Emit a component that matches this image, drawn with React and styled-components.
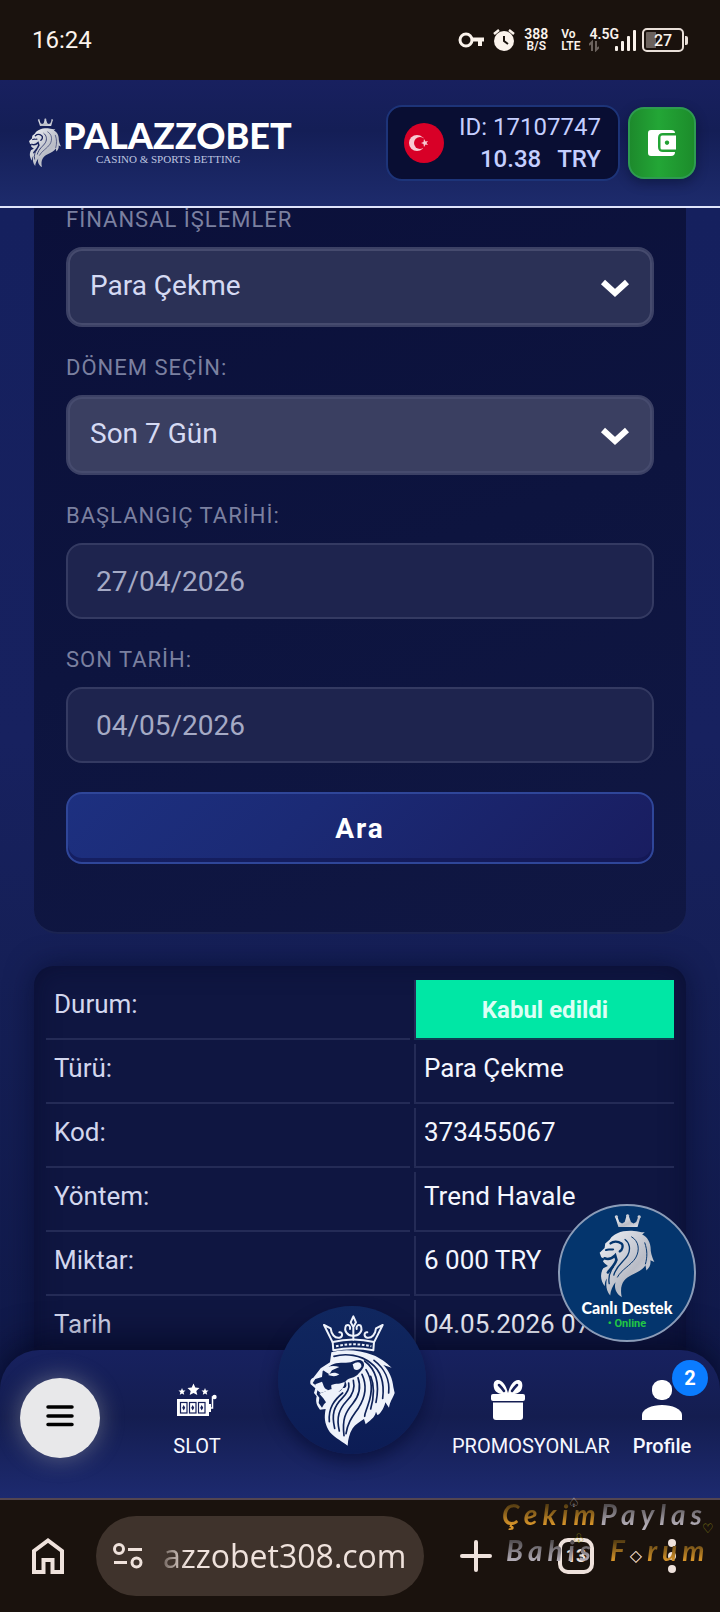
import { useState } from "react";
import styled, { createGlobalStyle } from "styled-components";

const GlobalStyle = createGlobalStyle`
  * {
    box-sizing: border-box;
  }
  body {
    margin: 0;
    background-color: #1a120d;
    font-family: Roboto, "Noto Sans", sans-serif;
  }
  button {
    font-family: inherit;
    border: none;
    padding: 0;
    cursor: pointer;
  }
  a {
    color: inherit;
    text-decoration: none;
  }
  svg {
    display: block;
  }
`;

const Screen = styled.div`
  height: 100vh;
  display: flex;
  flex-direction: column;
  overflow: hidden;
`;

/* status bar */
const StatusBar = styled.div`
  flex: none;
  height: 80px;
  padding: 0 32px;
  display: flex;
  align-items: center;
  justify-content: space-between;
  background-color: #1a120d;
  color: #fbf3ec;
`;
const Clock = styled.span`
  font-size: 24px;
`;
const StatusIcons = styled.div`
  display: flex;
  align-items: center;
`;
const StatusStack = styled.div`
  margin-left: ${(props) => props.gap};
  display: flex;
  flex-direction: column;
  align-items: ${(props) => props.align || "center"};
  font-size: 12px;
  line-height: 12px;
  font-weight: 600;
`;
const StatusBig = styled.span`
  font-size: 14px;
`;
const AlarmWrap = styled.span`
  margin-left: 8px;
`;
const Signal = styled.div`
  display: flex;
  align-items: flex-end;
  gap: 3px;
  height: 22px;
  margin-left: -4px;
`;
const SignalBar = styled.span`
  width: 3px;
  border-radius: 1px;
  background-color: #fbf3ec;
  height: ${(props) => props.size};
`;
const Battery = styled.div`
  width: 42px;
  height: 24px;
  margin-left: 6px;
  border: 2px solid #e9dfd8;
  border-radius: 5px;
  display: flex;
  align-items: center;
  justify-content: center;
  font-size: 16px;
  font-weight: 500;
  background: linear-gradient(90deg, #6b625d 28%, transparent 28%) content-box;
  padding: 2px;
`;
const BatteryTip = styled.span`
  width: 3px;
  height: 9px;
  margin: 0 0 0 1px;
  border-radius: 0 2px 2px 0;
  background-color: #e9dfd8;
`;

/* header */
const Header = styled.header`
  flex: none;
  height: 128px;
  padding: 0 24px 0 28px;
  display: flex;
  align-items: center;
  justify-content: space-between;
  border-bottom: 2px solid #dfe4fb;
  background: linear-gradient(180deg, #18205f 0%, #141e56 40%, #1d2b6c 100%);
  position: relative;
  z-index: 2;
`;
const Logo = styled.a`
  display: flex;
  align-items: center;
  gap: 1px;
  color: #fff;
`;
const LogoText = styled.div`
  display: flex;
  flex-direction: column;
`;
const LogoName = styled.span`
  font-family: Lato, sans-serif;
  font-weight: 900;
  font-size: 36px;
  line-height: 32px;
`;
const LogoSub = styled.span`
  padding-left: 33px;
  font-family: "Liberation Serif", serif;
  font-size: 11px;
  line-height: 16px;
  color: #bfc6e0;
`;
const HeaderRight = styled.div`
  display: flex;
  align-items: center;
  gap: 8px;
`;
const Account = styled.div`
  width: 234px;
  height: 76px;
  padding: 0 17px 0 16px;
  border: 2px solid #1d3479;
  border-radius: 16px;
  background-color: #090e33;
  display: flex;
  align-items: center;
  justify-content: space-between;
`;
const AccountText = styled.div`
  display: flex;
  flex-direction: column;
  align-items: flex-end;
  color: #c5cfff;
  font-size: 24px;
  line-height: 32px;
`;
const Balance = styled.div`
  display: flex;
  gap: 16px;
  font-weight: 500;
`;
const WalletButton = styled.button`
  width: 68px;
  height: 72px;
  border: 2px solid #2e9c50;
  border-radius: 16px;
  background: linear-gradient(90deg, #1d8a2c 0%, #23a636 45%, #1c8c2b 100%);
  box-shadow: 0 4px 12px rgba(0, 10, 30, 0.4);
  display: flex;
  align-items: center;
  justify-content: center;
`;

/* content */
const Content = styled.main`
  flex: 1;
  min-height: 0;
  overflow-y: auto;
  scrollbar-width: none;
  padding: 0 34px;
  display: flex;
  flex-direction: column;
  gap: 32px;
  background: linear-gradient(180deg, #15205e 0%, #17215f 45%, #151f56 65%, #101949 100%);
`;
const FilterPanel = styled.form`
  flex: none;
  padding: 0 32px 68px;
  border-bottom: 2px solid #1b2452;
  border-radius: 0 0 24px 24px;
  background: linear-gradient(160deg, #0b103a 0%, #0d143f 50%, #101743 100%);
`;
const Field = styled.div`
  margin-bottom: 29px;
`;
const Label = styled.label`
  display: block;
  margin-bottom: 15px;
  font-size: 22px;
  line-height: 24px;
  letter-spacing: 1px;
  color: #7b80a0;
`;
const SelectBox = styled.div`
  position: relative;
  height: 80px;
  border: 2px solid #3c4165;
  border-radius: 16px;
  background-color: ${(props) => (props.$light ? "#3a3f61" : "#2b3156")};
`;
const Select = styled.select`
  appearance: none;
  width: 100%;
  height: 100%;
  padding: 0 60px 4px 20px;
  border: 2px solid #464b6e;
  border-radius: 14px;
  background: transparent;
  color: #d5daf3;
  font-family: inherit;
  font-size: 28px;
`;
const Chevron = styled.svg`
  position: absolute;
  right: 22px;
  top: 30px;
  pointer-events: none;
`;
const DateInput = styled.input`
  display: block;
  width: 100%;
  height: 76px;
  padding: 0 28px;
  border: 2px solid #343a62;
  border-radius: 16px;
  background-color: #1e244e;
  color: #a5aac5;
  font-family: inherit;
  font-size: 28px;
`;
const SearchButton = styled.button`
  width: 100%;
  height: 72px;
  border: 2px solid #2f4699;
  border-radius: 16px;
  background: linear-gradient(135deg, #1d3080 0%, #1b2a75 40%, #191d60 100%);
  box-shadow: inset 0 -4px 0 rgba(16, 22, 80, 0.6);
  color: #fff;
  font-size: 28px;
  font-weight: 700;
  letter-spacing: 2px;
`;

const ResultPanel = styled.section`
  flex: none;
  padding: 10px 8px;
  border-radius: 20px;
  background-color: #0f1641;
  box-shadow: 0 0 28px rgba(5, 10, 40, 0.6), inset 0 0 24px rgba(6, 8, 40, 0.5);
`;
const ResultTable = styled.table`
  width: 100%;
  table-layout: fixed;
  border-collapse: separate;
  border-spacing: 4px;
  font-size: 26px;
  line-height: 28px;
`;
const Key = styled.th`
  height: 60px;
  padding: 10px 8px 8px;
  text-align: left;
  vertical-align: top;
  font-weight: 400;
  color: #d3d7ee;
  border-bottom: 2px solid #242b56;
`;
const Value = styled.td`
  width: 260px;
  padding: 10px 8px 8px;
  vertical-align: top;
  color: #f4f6ff;
  white-space: nowrap;
  border-left: 2px solid #242b56;
  border-bottom: 2px solid #242b56;
`;
const StatusValue = styled(Value)`
  vertical-align: middle;
  text-align: center;
  font-size: 24px;
  font-weight: 700;
  color: #dcfff5;
  border-bottom-color: #0f3b52;
  background-color: #00e7a5;
  background-clip: padding-box;
`;

/* bottom dock */
const Dock = styled.nav`
  flex: none;
  height: 148px;
  margin-top: -40px;
  display: grid;
  grid-template-columns:
    minmax(0, 120fr) minmax(0, 154fr) minmax(0, 156fr)
    minmax(0, 156fr) minmax(0, 134fr);
  border-radius: 40px 40px 0 0;
  background: linear-gradient(180deg, #17215f 0%, #141d50 45%, #1d2a6f 100%);
  box-shadow: 0 -6px 36px rgba(3, 6, 30, 0.75);
  position: relative;
  z-index: 3;
`;
const MenuButton = styled.button`
  width: 80px;
  height: 80px;
  margin: 28px 0 0 20px;
  padding-bottom: 4px;
  border-radius: 50%;
  background-color: #e8e8ea;
  box-shadow: 0 0 24px rgba(200, 200, 190, 0.4);
  display: flex;
  align-items: center;
  justify-content: center;
`;
const DockLink = styled.a`
  padding: ${(props) => (props.$last ? "30px 0 0 18px" : "30px 22px 0")};
  display: flex;
  flex-direction: column;
  align-items: center;
  gap: 14px;
  color: #f6f7ff;
  font-size: 20px;
  line-height: 24px;
  font-weight: ${(props) => (props.$last ? 500 : 400)};
`;
const DockLabel = styled.span`
  max-width: 100%;
  white-space: nowrap;
`;
const IconWithBadge = styled.div`
  position: relative;
`;
const Badge = styled.span`
  position: absolute;
  left: 30px;
  top: -20px;
  width: 36px;
  height: 36px;
  border-radius: 50%;
  background-color: #0a7cff;
  color: #fff;
  font-size: 20px;
  line-height: 36px;
  font-weight: 700;
  text-align: center;
`;
const LionButton = styled.button`
  width: 148px;
  height: 148px;
  margin: -44px auto 0 4px;
  border-radius: 50%;
  background: linear-gradient(180deg, #10275f 0%, #0c1c55 100%);
  box-shadow: 0 8px 16px rgba(5, 12, 50, 0.6);
  display: flex;
  align-items: center;
  justify-content: center;
`;
const ChatButton = styled.button`
  position: absolute;
  right: 24px;
  bottom: 156px;
  width: 138px;
  height: 138px;
  border: 2px solid #8b9cb8;
  border-radius: 50%;
  background-color: #04356d;
  display: flex;
  flex-direction: column;
  align-items: center;
  padding-top: 7px;
`;
const ChatTitle = styled.span`
  font-family: Lato, sans-serif;
  font-weight: 900;
  font-size: 16px;
  line-height: 18px;
  color: #fff;
`;
const ChatState = styled.span`
  font-size: 11px;
  line-height: 14px;
  font-weight: 700;
  color: #22c644;
`;

/* browser bar */
const BrowserBar = styled.footer`
  flex: none;
  height: 114px;
  border-top: 2px solid #544650;
  background-color: #1a120d;
  color: #efe2dc;
  display: flex;
  align-items: center;
  position: relative;
  z-index: 4;
`;
const BarButton = styled.button`
  width: ${(props) => props.$width || "96px"};
  height: 80px;
  background: transparent;
  color: inherit;
  display: flex;
  align-items: center;
  justify-content: center;
`;
const AddressPill = styled.div`
  flex: 1;
  min-width: 0;
  height: 80px;
  padding: 0 16px;
  border-radius: 40px;
  background-color: #3f332c;
  display: flex;
  align-items: center;
`;
const Address = styled.a`
  margin-left: 20px;
  font-family: "Open Sans", sans-serif;
  font-size: 32px;
  line-height: 40px;
  mask-image: linear-gradient(90deg, rgba(0, 0, 0, 0.3) 0, #000 24px);
`;
const TabCount = styled.span`
  width: 36px;
  height: 36px;
  border: 4px solid #efe2dc;
  border-radius: 10px;
  font-size: 18px;
  line-height: 28px;
  font-weight: 700;
  text-align: center;
`;
const Watermark = styled.div`
  position: absolute;
  right: 0;
  top: -4px;
  width: 218px;
  font-family: Lato, sans-serif;
  font-style: italic;
  font-weight: 700;
  font-size: 28px;
  line-height: 36px;
  letter-spacing: 5px;
  white-space: nowrap;
  pointer-events: none;
`;
const WatermarkLine = styled.div`
  padding-left: ${(props) => props.$indent || "0"};
  display: flex;
  gap: ${(props) => props.$gap || "0"};
`;
const Tint = styled.span`
  color: transparent;
  background-clip: text;
  background-image: ${(props) =>
        props.$gold
            ? "linear-gradient(180deg, #4b3610 20%, #d8952a 80%)"
            : "linear-gradient(180deg, #4a4648 20%, #b3adb6 80%)"};
`;
const Diamond = styled.span`
  font-family: "DejaVu Sans", sans-serif;
  font-style: normal;
  font-weight: 400;
  font-size: 16px;
  line-height: 20px;
  color: #d8cdd0;
`;
const Suit = styled.span`
  position: absolute;
  left: ${(props) => props.$x};
  top: ${(props) => props.$y};
  font-family: "DejaVu Sans", sans-serif;
  font-style: normal;
  font-weight: 400;
  font-size: 13px;
  line-height: 14px;
  letter-spacing: 0;
  color: ${(props) => props.color};
`;

const SilverLion = ({ width, height, cut }) => (
    <svg width={width} height={height} viewBox="176 68 176 260" aria-hidden="true">
        <defs>
            <linearGradient id="silver" x1="0" y1="0" x2="1" y2="1">
                <stop offset="0" stopColor="#f1f3f8" />
                <stop offset="0.6" stopColor="#b9bcc6" />
                <stop offset="1" stopColor="#e4e6ee" />
            </linearGradient>
        </defs>
        <g fill="url(#silver)">
            <circle cx="232" cy="79" r="5" />
            <circle cx="266" cy="76" r="5" />
            <circle cx="301" cy="79" r="5" />
            <path d="M229 82L238 110H296L304 82L297 82L292 95L284 99L276 95L270 78H262L257 95L249 99L241 95L236 82Z" />
            <path d="M212 148C222 130 250 119 285 122C298 123 308 127 318 126L310 133C326 140 337 158 336 182C338 196 342 206 347 216L335 211C337 224 332 234 323 242L320 226C312 240 296 247 278 256C256 267 240 284 248 323C232 313 224 298 229 278C221 289 214 302 213 318C201 303 199 288 203 266C198 272 196 282 197 290C184 275 181 252 192 235L206 228C200 224 194 220 191 214L196 207L186 202L181 188L196 174L198 160Z" />
        </g>
        <g fill="none" stroke={cut} strokeLinecap="round">
            <path strokeWidth="7" d="M214 160C222 153 236 152 247 160C254 166 250 180 242 184" />
            <path strokeWidth="6" d="M200 180C208 176 214 180 222 178" />
            <path strokeWidth="8" d="M196 205C208 210 220 204 228 196L232 210C227 226 214 238 206 248" />
            <path strokeWidth="4" d="M258 148C272 158 276 178 266 196C256 214 232 226 224 256" />
            <path strokeWidth="3" d="M278 140C300 152 304 180 290 204C276 226 246 240 235 262" />
            <path strokeWidth="3" d="M318 158C326 182 326 200 320 222" />
            <path strokeWidth="4" d="M222 232C212 246 206 260 210 282" />
        </g>
    </svg>
);

const CrownLion = () => (
    <svg width="88" height="134" viewBox="142 78 264 402" aria-hidden="true">
        <g fill="none" stroke="#eef2fb" strokeWidth="6" strokeLinejoin="round" strokeLinecap="round">
            <path d="M216 166L190 114L210 124C212 142 222 154 236 152C248 150 246 134 236 136" />
            <path d="M340 166L366 114L346 124C344 142 334 154 320 152C308 150 310 134 320 136" />
            <path d="M278 88L270 106L278 120L286 106Z M278 118V158" />
            <path d="M278 146C262 148 248 132 256 116C264 110 270 118 268 126" />
            <path d="M278 146C294 148 308 132 300 116C292 110 286 118 288 126" />
            <path d="M216 165C256 155 300 155 340 165L338 190C300 182 256 182 218 190Z" />
        </g>
        <path fill="none" stroke="#eef2fb" strokeWidth="6" strokeDasharray="8 5" d="M226 178C260 170 296 170 332 178" />
        <path
            fill="#eef2fb"
            d="M212 196C250 184 300 190 336 204C358 212 378 228 393 242L368 234C386 252 396 276 398 300L402 318C396 334 388 344 385 362L374 346C370 366 356 384 350 384L346 374C342 394 326 400 315 412L310 396C298 404 284 412 276 424C266 440 262 458 261 476C240 460 214 448 203 428C192 408 190 392 195 366L178 368C168 356 164 344 168 328L160 318L164 304L150 292C148 284 148 276 158 272L180 244L208 226Z"
        />
        <path
            fill="#0e2259"
            d="M212 234C230 224 252 230 270 226C284 220 300 214 308 226C316 240 300 252 290 264C274 276 262 272 254 284C262 296 254 306 246 302C240 318 226 316 212 306L176 320L188 334L196 346L190 352L184 362L174 348L176 332L168 322L172 300L156 288L164 276L184 270L186 252Z"
        />
        <g fill="#eef2fb">
            <path d="M186 248C200 238 216 234 236 240L214 250L206 262L194 254Z" />
            <path d="M202 264C214 254 226 256 236 262C226 270 214 268 202 264Z" />
            <path d="M164 292L184 284C190 296 188 306 206 310L180 318L168 308Z" />
            <path d="M212 294C226 288 240 292 252 284C252 298 244 306 234 314C222 322 210 312 212 294Z" />
            <path d="M276 232C290 220 304 226 302 238C298 250 286 252 280 246Z" />
        </g>
        <g fill="none" stroke="#0e2259" strokeWidth="5" strokeLinecap="round">
            <path d="M220 208C256 198 300 204 330 228C360 250 372 286 366 334" />
            <path d="M312 222C344 246 358 288 346 346" />
            <path d="M340 220C372 244 388 280 384 318" />
            <path d="M316 248C336 280 336 316 322 354C318 368 312 378 312 388" />
            <path d="M304 262C320 296 314 330 294 362C278 386 262 402 256 440" />
            <path d="M292 272C302 300 294 328 276 350C254 376 244 396 250 446" />
            <path d="M278 280C284 304 276 324 258 342C236 366 226 390 236 432" />
            <path d="M264 288C268 306 258 320 244 334C220 358 212 382 222 424" />
            <path d="M246 318C222 338 202 362 206 404" />
            <path d="M330 268C342 296 340 330 330 366" />
        </g>
    </svg>
);

const KeyIcon = () => (
    <svg width="27" height="18" viewBox="0 0 27 18" fill="none" stroke="currentColor" strokeWidth="3" aria-hidden="true">
        <circle cx="8" cy="9" r="6" />
        <path d="M14 8.5H26M22 8V15" strokeWidth="4" />
    </svg>
);

const AlarmIcon = () => (
    <svg width="22" height="24" viewBox="0 0 22 24" aria-hidden="true">
        <circle cx="11" cy="13" r="10" fill="currentColor" />
        <path d="M1 6L6 2M21 6L16 2" stroke="currentColor" strokeWidth="2.5" />
        <path d="M11 8V13L15 16" stroke="#1a120d" strokeWidth="2" fill="none" />
    </svg>
);

const FlagIcon = () => (
    <svg width="40" height="40" viewBox="0 0 40 40" aria-hidden="true">
        <circle cx="20" cy="20" r="20" fill="#d80027" />
        <circle cx="13" cy="20" r="8" fill="#f7c9d2" />
        <circle cx="16" cy="20" r="6" fill="#d80027" />
        <path fill="#f7c9d2" d="M20 16L21.5 18.5L24 18L22.5 20L24 22L21.5 21.5L20 24L19.5 21L17 20L19.5 19Z" />
    </svg>
);

const WalletIcon = () => (
    <svg width="28" height="28" viewBox="0 0 28 28" aria-hidden="true">
        <path
            fill="#fff"
            d="M3 1H23Q27 1 27 4H15Q10 4 10 9V18Q10 23 15 23H27Q27 27 23 27H3Q0 27 0 24V4Q0 1 3 1Z"
        />
        <path fill="#fff" fillRule="evenodd" d="M14 6.5H28V20.5H14Q12.5 20.5 12.5 19V8Q12.5 6.5 14 6.5ZM19 11.5A2.2 2.2 0 1 0 19.01 11.5Z" />
    </svg>
);

const MenuIcon = () => (
    <svg width="28" height="22" viewBox="0 0 28 22" stroke="#000" strokeWidth="3.5" strokeLinecap="round" aria-hidden="true">
        <path d="M2 2H26M2 11H26M2 19.5H26" />
    </svg>
);

const SlotIcon = () => (
    <svg width="42" height="40" viewBox="0 0 42 40" aria-hidden="true">
        <g fill="#fff">
            <path d="M17.5 3.5L19.3 7.6L23.5 8L20.3 10.9L21.3 15L17.5 12.9L13.7 15L14.7 10.9L11.5 8L15.7 7.6Z" />
            <path d="M6 8L7 10.4L9.5 10.6L7.6 12.3L8.2 14.8L6 13.5L3.8 14.8L4.4 12.3L2.5 10.6L5 10.4Z" />
            <path d="M29 8L30 10.4L32.5 10.6L30.6 12.3L31.2 14.8L29 13.5L26.8 14.8L27.4 12.3L25.5 10.6L28 10.4Z" />
            <rect x="1" y="19" width="32" height="17" />
            <rect x="32" y="24" width="3" height="8" />
            <circle cx="38.5" cy="17" r="2.2" />
        </g>
        <path d="M34 28H36.5V17H39" fill="none" stroke="#fff" strokeWidth="1.5" />
        <g fill="#fff" stroke="#17205a" strokeWidth="1.2">
            <rect x="4.5" y="22.5" width="6.5" height="10.5" />
            <rect x="13.5" y="22.5" width="6.5" height="10.5" />
            <rect x="22.5" y="22.5" width="6.5" height="10.5" />
        </g>
        <path fill="#17205a" d="M7.7 25L9.2 27.7L7.7 30.5L6.2 27.7ZM16.7 25L18.2 27.7L16.7 30.5L15.2 27.7ZM25.7 25L27.2 27.7L25.7 30.5L24.2 27.7Z" />
    </svg>
);

const GiftIcon = () => (
    <svg width="34" height="40" viewBox="0 0 34 40" aria-hidden="true">
        <g fill="#fff">
            <rect x="0" y="14" width="34" height="7" rx="2" />
            <path d="M2 22.5H32V37Q32 40 29 40H5Q2 40 2 37Z" />
            <path d="M17 13C15 5 11 0 7 0C3 0 2 4 3 8C4 12 8 14 12 14H22C26 14 30 12 31 8C32 4 31 0 27 0C23 0 19 5 17 13Z" />
        </g>
        <path d="M8 5Q11 8 13 11M26 5Q23 8 21 11" stroke="#17205a" strokeWidth="2.5" strokeLinecap="round" />
    </svg>
);

const ProfileIcon = () => (
    <svg width="40" height="40" viewBox="0 0 40 40" fill="#fff" aria-hidden="true">
        <rect x="10" y="0" width="20" height="20" rx="9" />
        <path d="M0 40V35C0 29 10 25 20 25S40 29 40 35V40Z" />
    </svg>
);

const HomeIcon = () => (
    <svg width="32" height="36" viewBox="0 0 32 36" fill="none" stroke="currentColor" strokeWidth="4" aria-hidden="true">
        <path d="M2 34V13L16 2.5L30 13V34H20.5V22H11.5V34Z" />
    </svg>
);

const TuneIcon = () => (
    <svg width="31" height="26" viewBox="0 0 31 26" fill="none" stroke="currentColor" strokeWidth="3" aria-hidden="true">
        <circle cx="7" cy="6" r="4.5" />
        <path d="M16 6.5H30M2 19.5H15" />
        <circle cx="24.5" cy="19.5" r="4.5" />
    </svg>
);

const PlusIcon = () => (
    <svg width="32" height="32" viewBox="0 0 32 32" stroke="currentColor" strokeWidth="4" strokeLinecap="round" aria-hidden="true">
        <path d="M16 2V30M2 16H30" />
    </svg>
);

const DotsIcon = () => (
    <svg width="8" height="34" viewBox="0 0 8 34" fill="currentColor" aria-hidden="true">
        <circle cx="4" cy="4" r="4" />
        <circle cx="4" cy="17" r="4" />
        <circle cx="4" cy="30" r="4" />
    </svg>
);

const rows = [
    { name: "Türü:", value: "Para Çekme" },
    { name: "Kod:", value: "373455067" },
    { name: "Yöntem:", value: "Trend Havale" },
    { name: "Miktar:", value: "6 000 TRY" },
    { name: "Tarih", value: "04.05.2026 07:12" },
];

const SelectField = ({ id, label, options, light }) => (
    <Field>
        <Label htmlFor={id}>{label}</Label>
        <SelectBox $light={light}>
            <Select id={id}>
                {options.map((o) => (
                    <option key={o}>{o}</option>
                ))}
            </Select>
            <Chevron width="30" height="20" viewBox="0 0 30 20" fill="none" stroke="#fff" strokeWidth="6">
                <path d="M3 3L15 14L27 3" />
            </Chevron>
        </SelectBox>
    </Field>
);

const App = () => {
    const [start, setStart] = useState("27/04/2026");
    const [end, setEnd] = useState("04/05/2026");

    return (
        <Screen>
            <GlobalStyle />
            <StatusBar>
                <Clock>16:24</Clock>
                <StatusIcons>
                    <KeyIcon />
                    <AlarmWrap>
                        <AlarmIcon />
                    </AlarmWrap>
                    <StatusStack gap="9px">
                        <StatusBig>388</StatusBig>
                        <span>B/S</span>
                    </StatusStack>
                    <StatusStack gap="13px" align="flex-start">
                        <span>Vo</span>
                        <span>LTE</span>
                    </StatusStack>
                    <StatusStack gap="9px" align="flex-start">
                        <StatusBig>4.5G</StatusBig>
                        <svg width="10" height="12" viewBox="0 0 10 12" fill="none" stroke="#6b625d" strokeWidth="2">
                            <path d="M3 11V2L0 5M7 1V10L10 7" />
                        </svg>
                    </StatusStack>
                    <Signal>
                        <SignalBar size="5px" />
                        <SignalBar size="10px" />
                        <SignalBar size="15px" />
                        <SignalBar size="21px" />
                    </Signal>
                    <Battery>27</Battery>
                    <BatteryTip />
                </StatusIcons>
            </StatusBar>

            <Header>
                <Logo href="#home">
                    <SilverLion width={34} height={50} cut="#17215c" />
                    <LogoText>
                        <LogoName>PALAZZOBET</LogoName>
                        <LogoSub>CASINO &amp; SPORTS BETTING</LogoSub>
                    </LogoText>
                </Logo>
                <HeaderRight>
                    <Account>
                        <FlagIcon />
                        <AccountText>
                            <span>ID: 17107747</span>
                            <Balance>
                                <span>10.38</span>
                                <span>TRY</span>
                            </Balance>
                        </AccountText>
                    </Account>
                    <WalletButton aria-label="Wallet">
                        <WalletIcon />
                    </WalletButton>
                </HeaderRight>
            </Header>

            <Content>
                <FilterPanel onSubmit={(e) => e.preventDefault()}>
                    <SelectField id="operation" label="FİNANSAL İŞLEMLER" options={["Para Çekme", "Para Yatırma"]} />
                    <SelectField id="period" label="DÖNEM SEÇİN:" options={["Son 7 Gün", "Son 30 Gün"]} light />
                    <Field>
                        <Label htmlFor="start">BAŞLANGIÇ TARİHİ:</Label>
                        <DateInput id="start" value={start} onChange={(e) => setStart(e.target.value)} />
                    </Field>
                    <Field>
                        <Label htmlFor="end">SON TARİH:</Label>
                        <DateInput id="end" value={end} onChange={(e) => setEnd(e.target.value)} />
                    </Field>
                    <SearchButton type="submit">Ara</SearchButton>
                </FilterPanel>

                <ResultPanel>
                    <ResultTable>
                        <tbody>
                            <tr>
                                <Key scope="row">Durum:</Key>
                                <StatusValue>Kabul edildi</StatusValue>
                            </tr>
                            {rows.map((row) => (
                                <tr key={row.name}>
                                    <Key scope="row">{row.name}</Key>
                                    <Value>{row.value}</Value>
                                </tr>
                            ))}
                        </tbody>
                    </ResultTable>
                </ResultPanel>
            </Content>

            <Dock>
                <MenuButton aria-label="Menu">
                    <MenuIcon />
                </MenuButton>
                <DockLink href="#slot">
                    <SlotIcon />
                    <DockLabel>SLOT</DockLabel>
                </DockLink>
                <LionButton aria-label="Palazzobet">
                    <CrownLion />
                </LionButton>
                <DockLink href="#promotions">
                    <GiftIcon />
                    <DockLabel>PROMOSYONLAR</DockLabel>
                </DockLink>
                <DockLink href="#profile" $last>
                    <IconWithBadge>
                        <ProfileIcon />
                        <Badge>2</Badge>
                    </IconWithBadge>
                    <DockLabel>Profile</DockLabel>
                </DockLink>
                <ChatButton>
                    <SilverLion width={58} height={86} cut="#04356d" />
                    <ChatTitle>Canlı Destek</ChatTitle>
                    <ChatState>• Online</ChatState>
                </ChatButton>
            </Dock>

            <BrowserBar>
                <BarButton aria-label="Home">
                    <HomeIcon />
                </BarButton>
                <AddressPill>
                    <TuneIcon />
                    <Address href="#address">azzobet308.com</Address>
                </AddressPill>
                <BarButton aria-label="New tab" $width="104px">
                    <PlusIcon />
                </BarButton>
                <BarButton aria-label="Tabs">
                    <TabCount>13</TabCount>
                </BarButton>
                <BarButton aria-label="More">
                    <DotsIcon />
                </BarButton>
                <Watermark>
                    <WatermarkLine>
                        <Tint $gold>Çekim</Tint>
                        <Tint>Paylas</Tint>
                    </WatermarkLine>
                    <WatermarkLine $indent="4px" $gap="14px">
                        <Tint>Bahis</Tint>
                        <Tint $gold>
                            F<Diamond>◇</Diamond>rum
                        </Tint>
                    </WatermarkLine>
                    <Suit $x="66px" $y="0" color="#b3adb6">♤</Suit>
                    <Suit $x="200px" $y="26px" color="#8a8416">♡</Suit>
                    <Suit $x="71px" $y="36px" color="#8a8416">♧</Suit>
                </Watermark>
            </BrowserBar>
        </Screen>
    );
};

export default App;
